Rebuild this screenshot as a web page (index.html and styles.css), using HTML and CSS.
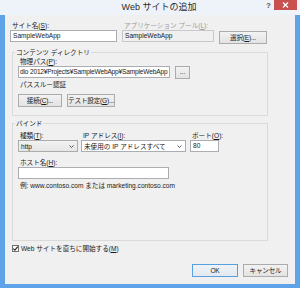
FILE: index.html
```html
<!DOCTYPE html>
<html lang="ja">
<head>
<meta charset="utf-8">
<title>Web サイトの追加</title>
<link rel="stylesheet" href="styles.css">
</head>
<body>
<div class="window">
  <div class="titlebar">
    <span class="title">Web サイトの追加</span>
    <span class="help">?</span>
    <span class="close"><svg width="7" height="6" viewBox="0 0 7 6"><path d="M1 0.5 L6 5.5 M6 0.5 L1 5.5" stroke="#fff" stroke-width="1.3"/></svg></span>
  </div>
  <div class="client">
    <div class="toprow">
      <div class="field site">
        <div class="label">サイト名(<u>S</u>):</div>
        <div class="input">SampleWebApp</div>
      </div>
      <div class="field pool">
        <div class="label disabled">アプリケーション プール(<u>L</u>):</div>
        <div class="input readonly">SampleWebApp</div>
      </div>
      <div class="btn select">選択(<u>E</u>)...</div>
    </div>

    <fieldset class="group content">
      <legend>コンテンツ ディレクトリ</legend>
      <div class="label">物理パス(<u>P</u>):</div>
      <div class="pathrow">
        <div class="input path">dio 2012¥Projects¥SampleWebApp¥SampleWebApp</div>
        <div class="btn dots">...</div>
      </div>
      <div class="label auth">パススルー認証</div>
      <div class="btnrow">
        <div class="btn connect">接続(<u>C</u>)...</div>
        <div class="btn test">テスト設定(<u>G</u>)...</div>
      </div>
    </fieldset>

    <fieldset class="group binding">
      <legend>バインド</legend>
      <div class="bindrow">
        <div class="field type">
          <div class="label">種類(<u>T</u>):</div>
          <div class="combo list"><span>http</span><svg width="5" height="3" viewBox="0 0 5 3"><path d="M0.5 0.5 L2.5 2.5 L4.5 0.5" fill="none" stroke="#444" stroke-width="0.9"/></svg></div>
        </div>
        <div class="field ip">
          <div class="label">IP アドレス(<u>I</u>):</div>
          <div class="combo edit"><span>未使用の IP アドレスすべて</span><svg width="5" height="3" viewBox="0 0 5 3"><path d="M0.5 0.5 L2.5 2.5 L4.5 0.5" fill="none" stroke="#444" stroke-width="0.9"/></svg></div>
        </div>
        <div class="field port">
          <div class="label">ポート(<u>O</u>):</div>
          <div class="input">80</div>
        </div>
      </div>
      <div class="label host">ホスト名(<u>H</u>):</div>
      <div class="input hostinput"></div>
      <div class="label example">例: www.contoso.com または marketing.contoso.com</div>
    </fieldset>

    <div class="check">
      <span class="box"><svg width="7" height="7" viewBox="0 0 7 7"><path d="M1.3 3.6 L2.9 5.2 L5.8 1.6" fill="none" stroke="#222" stroke-width="1.1"/></svg></span>
      <span class="label">Web サイトを直ちに開始する(<u>M</u>)</span>
    </div>

    <div class="actions">
      <div class="btn ok">OK</div>
      <div class="btn cancel">キャンセル</div>
    </div>
  </div>
</div>
</body>
</html>
```

FILE: styles.css
```css
html, body {
  margin: 0;
  padding: 0;
  background: #ffffff;
}

.window {
  width: 300px;
  height: 288px;
  box-sizing: border-box;
  background: #5ea3e8;
  display: flex;
  flex-direction: column;
  font-family: "Liberation Sans", "Noto Sans CJK JP", sans-serif;
  font-size: 6.6px;
  color: #1a1a1a;
}

.titlebar {
  height: 15px;
  display: flex;
  align-items: flex-start;
  background: #eef3f9;
}

.title {
  flex: 1;
  text-align: center;
  font-size: 9px;
  line-height: 14px;
  color: #2b2b2b;
  padding-left: 52px;
}

.help {
  width: 8px;
  font-size: 8px;
  line-height: 11px;
  font-weight: bold;
  color: #555;
}

.close {
  width: 23px;
  height: 10px;
  background: #c85050;
  display: flex;
  align-items: center;
  justify-content: center;
  margin-right: 3px;
}

.client {
  flex: 1;
  margin: 0 5px 4px 5px;
  background: #f0f0f0;
  padding: 6px 7px 0 5px;
  display: flex;
  flex-direction: column;
}

.label {
  line-height: 9px;
  height: 9px;
  white-space: nowrap;
  padding-left: 2px;
}

.label.disabled {
  color: #9b9b9b;
}

.input {
  box-sizing: border-box;
  height: 12px;
  border: 1px solid #abadb3;
  background: #ffffff;
  line-height: 10px;
  padding: 0 2px;
  white-space: nowrap;
  overflow: hidden;
}

.input.readonly {
  background: #f0f0f0;
  border-color: #c8c8c8;
}

.btn {
  box-sizing: border-box;
  height: 13px;
  border: 1px solid #acacac;
  background: linear-gradient(#f2f2f2, #e3e3e3);
  display: flex;
  align-items: center;
  justify-content: center;
  white-space: nowrap;
  line-height: 11px;
  letter-spacing: -0.2px;
}

.toprow {
  display: flex;
  align-items: flex-start;
}

.field.site {
  width: 107px;
}

.field.pool {
  width: 92px;
  margin-left: 5px;
}

.btn.select {
  width: 48px;
  margin-left: 5px;
  margin-top: 10px;
}

fieldset.group {
  margin: 0;
  padding: 0 0 0 5px;
  border: 1px solid #dadada;
  min-width: 0;
  width: 256px;
  box-sizing: border-box;
}

fieldset.group legend {
  padding: 0 1px;
  margin-left: -3px;
  line-height: 9px;
}

fieldset.content {
  margin-left: 2px;
  margin-top: 4px;
  height: 68px;
}

.pathrow {
  display: flex;
  align-items: flex-start;
}

.input.path {
  width: 152px;
  padding-left: 1px;
  letter-spacing: -0.18px;
}

.btn.dots {
  width: 15px;
  margin-left: 5px;
  align-items: flex-end;
  padding-bottom: 3px;
  line-height: 6px;
  letter-spacing: 0;
}

.label.auth {
  margin-top: 1px;
}

.btnrow {
  display: flex;
  margin-top: 5px;
}

.btn.connect {
  width: 44px;
}

.btn.test {
  width: 48px;
  margin-left: 5px;
}

fieldset.binding {
  margin-left: 2px;
  margin-top: 3px;
  height: 122px;
}

.bindrow {
  display: flex;
  margin-top: 3px;
}

.field.type {
  width: 60px;
}

.field.ip {
  width: 105px;
  margin-left: 3px;
}

.field.port {
  width: 29px;
  margin-left: 4px;
}

.combo {
  box-sizing: border-box;
  height: 12px;
  border: 1px solid #acacac;
  display: flex;
  align-items: center;
  justify-content: space-between;
  padding: 0 3px 0 2px;
  white-space: nowrap;
  overflow: hidden;
}

.combo.list {
  background: linear-gradient(#f2f2f2, #e6e6e6);
}

.combo.edit {
  background: #ffffff;
  border-color: #abadb3;
}

.label.host {
  margin-top: 6px;
}

.input.hostinput {
  width: 151px;
}

.label.example {
  margin-top: 2px;
}

.check {
  display: flex;
  align-items: center;
  margin-top: 3px;
  margin-left: 2px;
  height: 9px;
}

.check .box {
  box-sizing: border-box;
  width: 7px;
  height: 7px;
  border: 1px solid #707070;
  background: #ffffff;
  display: flex;
  align-items: center;
  justify-content: center;
}

.check .box svg {
  flex: none;
}

.check .label {
  padding-left: 2px;
}

.actions {
  display: flex;
  justify-content: flex-end;
  margin-top: 11px;
}

.btn.ok {
  width: 46px;
  border-color: #5a9fe0;
  background: linear-gradient(#eef3f8, #e3e9ef);
}

.btn.cancel {
  width: 45px;
  margin-left: 5px;
}
```
